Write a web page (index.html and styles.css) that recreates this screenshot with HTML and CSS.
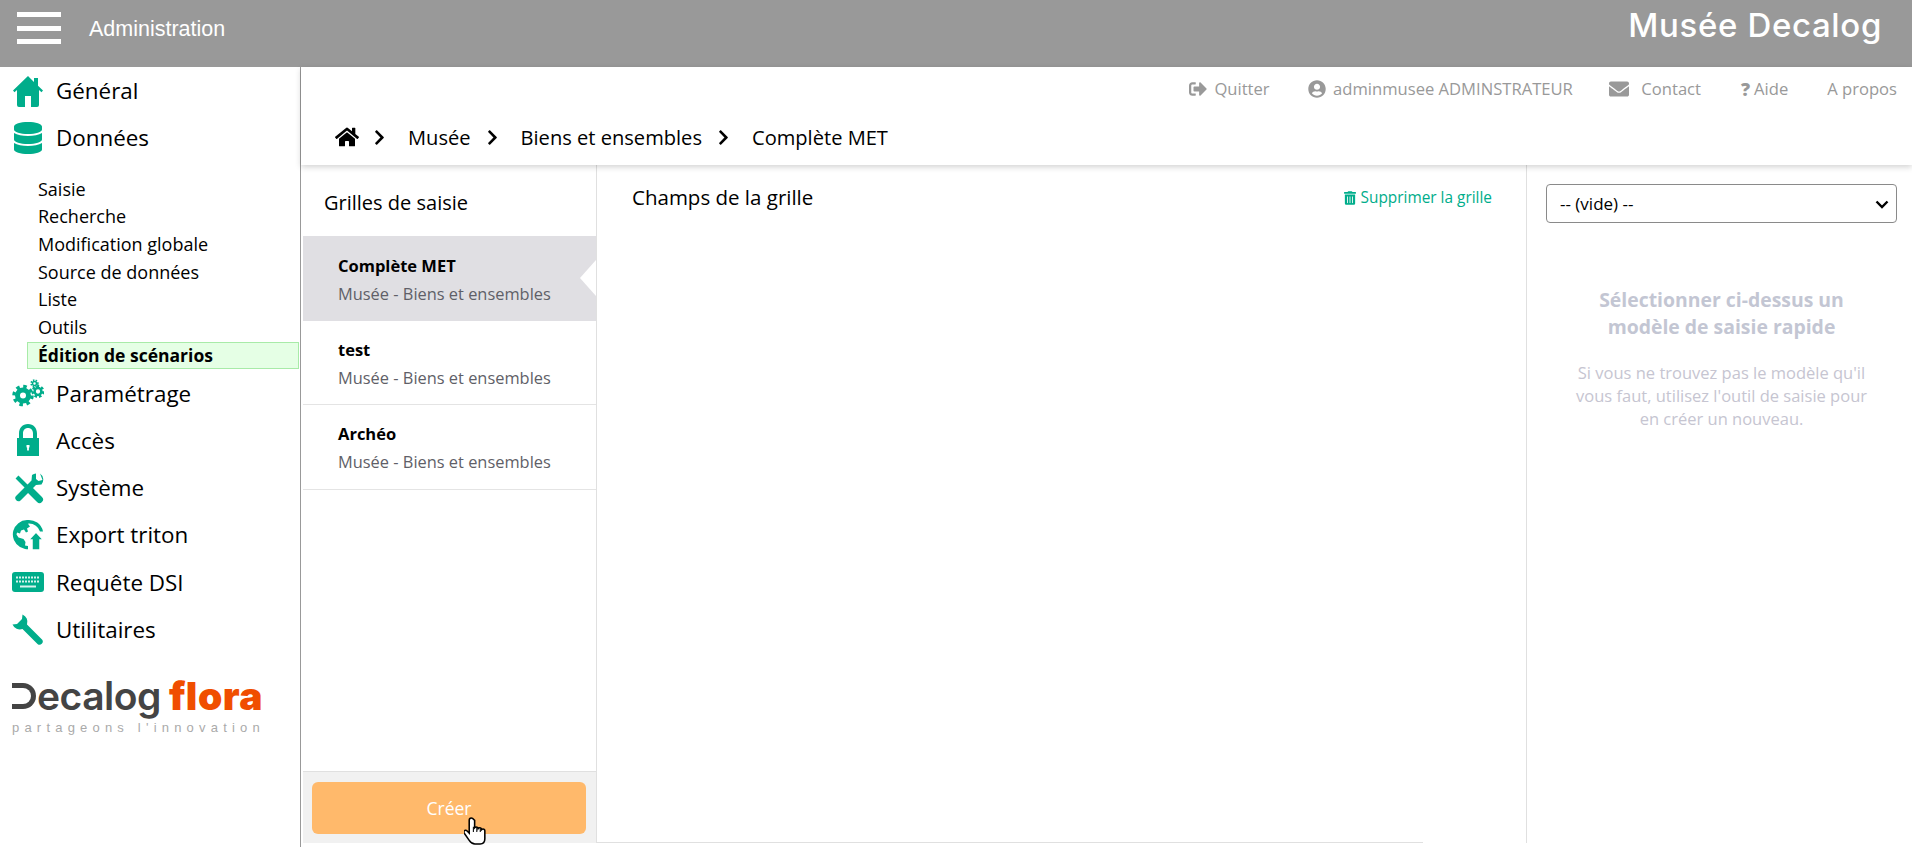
FILE: index.html
```html
<!DOCTYPE html>
<html lang="fr">
<head>
<meta charset="utf-8">
<title>Administration</title>
<link rel="stylesheet" href="styles.css">
</head>
<body>
<svg class="defs" width="0" height="0" aria-hidden="true">
  <symbol id="i-chev" viewBox="0 0 320 512"><path d="M285.476 272.971L91.132 467.314c-9.373 9.373-24.569 9.373-33.941 0l-22.667-22.667c-9.357-9.357-9.375-24.522-.04-33.901L188.505 256 34.484 101.255c-9.335-9.379-9.317-24.544.04-33.901l22.667-22.667c9.373-9.373 24.569-9.373 33.941 0L285.475 239.03c9.373 9.372 9.373 24.568.001 33.941z"/></symbol>
</svg>
<header class="topbar">
  <button class="burger" aria-label="Menu"><span></span><span></span><span></span></button>
  <div class="app-name">Administration</div>
  <div class="brand">Musée Decalog</div>
</header>
<div class="shell">
  <aside class="sidebar">
    <nav class="nav">
      <a class="nav-item"><svg class="nav-icon" viewBox="0 0 32 32"><path d="M16 1L1 15.500l1.500 1.700L5 15v15a2 2 0 0 0 2 2h6V21h6v11h6a2 2 0 0 0 2-2V15l2.500 2.200L31 15.500 26 10.700V3h-4v4z"/></svg>Général</a>
      <a class="nav-item"><svg class="nav-icon" viewBox="0 0 448 512"><path d="M448 73.143v45.714C448 159.143 347.667 192 224 192S0 159.143 0 118.857V73.143C0 32.857 100.333 0 224 0s224 32.857 224 73.143zM448 176v102.857C448 319.143 347.667 352 224 352S0 319.143 0 278.857V176c48.125 33.143 136.208 48.572 224 48.572S399.874 209.143 448 176zm0 160v102.857C448 479.143 347.667 512 224 512S0 479.143 0 438.857V336c48.125 33.143 136.208 48.572 224 48.572S399.874 369.143 448 336z"/></svg>Données</a>
      <ul class="subnav">
        <li>Saisie</li>
        <li>Recherche</li>
        <li>Modification globale</li>
        <li>Source de données</li>
        <li>Liste</li>
        <li>Outils</li>
        <li class="current">Édition de scénarios</li>
      </ul>
      <a class="nav-item"><svg class="nav-icon" viewBox="0 0 32 28"><circle class="gear-teeth" cx="11" cy="16.500" r="9"/><circle class="gear-ring" cx="11" cy="16.500" r="5.500"/><circle class="gear-teeth-s" cx="26" cy="12.500" r="5.300"/><circle class="gear-ring-s" cx="26" cy="12.500" r="3.400"/><circle class="gear-teeth-t" cx="22.500" cy="4.500" r="3.400"/><circle class="gear-ring-t" cx="22.500" cy="4.500" r="2"/></svg>Paramétrage</a>
      <a class="nav-item"><svg class="nav-icon" viewBox="0 0 32 32"><path fill-rule="evenodd" d="M16 0c-5.500 0-9 4-9 9.500V14H5v18h22V14h-2V9.500C25 4 21.500 0 16 0zm0 4c3 0 5 2.200 5 5.500V14H11V9.500C11 6.200 13 4 16 4zm-1.500 17h3v2l-.6 1v2.500h-1.800V24l-.6-1z"/></svg>Accès</a>
      <a class="nav-item"><svg class="nav-icon" viewBox="0 0 32 32"><path class="tool-shaft" d="M5 5l21 21"/><path class="tool-grip" d="M19 19l8.500 8.500"/><path d="M28 1.500a7.500 7.500 0 0 1 1.500 11L24 13 8.500 28.500a3.200 3.200 0 0 1-4.500-4.500L19.500 8.500 20 3a7.500 7.500 0 0 1 4-1.600V7l2.500 2 4-1z"/></svg>Système</a>
      <a class="nav-item"><svg class="nav-icon" viewBox="0 0 32 32"><path fill-rule="evenodd" d="M15 1a14.500 14.500 0 0 0-7 27l5 2c1 .2 2 .2 3 .2V27a11.500 11.500 0 0 1-3-.5l.5-3.500-2-3-5-1.500-2-3 .5-2 3 1 1-3 3-1 2 3 2-1-1-3 3-2-2-2.800 1-.2a11.500 11.500 0 0 1 11 8h3A14.500 14.500 0 0 0 15 1z"/><path class="globe-arrow" d="M24 13l7.500 8H28v10h-8V21h-3.500z"/></svg>Export triton</a>
      <a class="nav-item"><svg class="nav-icon" viewBox="0 0 32 24"><rect class="kb" width="32" height="20" y="2" rx="3"/><path class="kb-keys" d="M4 7.500h24M4 11.500h24"/><path class="kb-bar" d="M8 16.500h16"/></svg>Requête DSI</a>
      <a class="nav-item"><svg class="nav-icon" viewBox="0 0 32 32"><path d="M10.500.5A8 8 0 0 1 15 10.500l15 15a3.200 3.200 0 0 1-4.500 4.500L10.500 15A8 8 0 0 1 .5 10.500L5 10l5-5z"/></svg>Utilitaires</a>
    </nav>
    <div class="logo">
      <div class="logo-word"><span class="logo-mark"></span><span class="logo-dark">ecalog</span><span class="logo-flora">flora</span></div>
      <div class="logo-tag">partageons l'innovation</div>
    </div>
  </aside>
  <main class="main">
    <div class="toolbar">
      <div class="userbar">
        <a class="ub-link ub-quit"><svg class="ub-icon" viewBox="0 0 512 512"><path d="M497 273L329 441c-15 15-41 4.500-41-17v-96H152c-13.300 0-24-10.700-24-24v-96c0-13.300 10.700-24 24-24h136V88c0-21.400 25.900-32 41-17l168 168c9.300 9.400 9.300 24.600 0 34zM192 436v-40c0-6.600-5.400-12-12-12H96c-17.700 0-32-14.300-32-32V160c0-17.700 14.300-32 32-32h84c6.600 0 12-5.400 12-12V76c0-6.600-5.400-12-12-12H96c-53 0-96 43-96 96v192c0 53 43 96 96 96h84c6.600 0 12-5.400 12-12z"/></svg>Quitter</a>
        <a class="ub-link"><svg class="ub-icon" viewBox="0 0 496 512"><path d="M248 8C111 8 0 119 0 256s111 248 248 248 248-111 248-248S385 8 248 8zm0 96c48.600 0 88 39.400 88 88s-39.400 88-88 88-88-39.400-88-88 39.400-88 88-88zm0 344c-58.700 0-111.300-26.600-146.500-68.200 18.800-35.400 55.600-59.800 98.500-59.800 2.400 0 4.800.4 7.100 1.100 13 4.200 26.600 6.900 40.900 6.900 14.300 0 28-2.700 40.900-6.900 2.300-.7 4.700-1.100 7.100-1.100 42.900 0 79.700 24.400 98.500 59.800C359.300 421.400 306.700 448 248 448z"/></svg>adminmusee ADMINSTRATEUR</a>
        <a class="ub-link"><svg class="ub-icon ub-mail" viewBox="0 0 512 512"><path d="M502.300 190.800c3.900-3.100 9.700-.2 9.700 4.700V400c0 26.500-21.500 48-48 48H48c-26.500 0-48-21.500-48-48V195.600c0-5 5.700-7.800 9.700-4.700 22.400 17.400 52.100 39.500 154.100 113.600 21.100 15.400 56.700 47.800 92.200 47.600 35.700.3 72-32.800 92.300-47.600 102-74.100 131.600-96.300 154-113.700zM256 320c23.200.4 56.600-29.200 73.400-41.400 132.700-96.300 142.800-104.700 173.400-128.700 5.800-4.500 9.200-11.500 9.200-18.900v-19c0-26.500-21.500-48-48-48H48C21.500 64 0 85.500 0 112v19c0 7.400 3.400 14.300 9.200 18.900 30.600 23.900 40.700 32.400 173.400 128.700 16.800 12.200 50.200 41.800 73.400 41.400z"/></svg>Contact</a>
        <a class="ub-link ub-help"><span class="qmark">?</span>Aide</a>
        <a class="ub-link ub-about">A propos</a>
      </div>
      <div class="crumbs">
        <svg class="crumb-home" viewBox="0 0 576 512"><path d="M280.370 148.260L96 300.110V464a16 16 0 0 0 16 16l112.060-.29a16 16 0 0 0 15.920-16V368a16 16 0 0 1 16-16h64a16 16 0 0 1 16 16v95.640a16 16 0 0 0 16 16.050L464 480a16 16 0 0 0 16-16V300L295.670 148.260a12.190 12.190 0 0 0-15.300 0zM571.600 251.470L488 182.560V44.050a12 12 0 0 0-12-12h-56a12 12 0 0 0-12 12v72.610L318.470 43a48 48 0 0 0-61 0L4.340 251.470a12 12 0 0 0-1.600 16.900l25.500 31A12 12 0 0 0 45.150 301l235.220-193.740a12.190 12.190 0 0 1 15.300 0L530.900 301a12 12 0 0 0 16.900-1.600l25.500-31a12 12 0 0 0-1.700-16.930z"/></svg>
        <svg class="crumb-sep"><use href="#i-chev"/></svg><span>Musée</span>
        <svg class="crumb-sep"><use href="#i-chev"/></svg><span>Biens et ensembles</span>
        <svg class="crumb-sep"><use href="#i-chev"/></svg><span>Complète MET</span>
      </div>
    </div>
    <div class="columns">
      <section class="col-list">
        <h2 class="list-title">Grilles de saisie</h2>
        <div class="list">
          <div class="grid-card active"><strong>Complète MET</strong><span>Musée - Biens et ensembles</span></div>
          <div class="grid-card"><strong>test</strong><span>Musée - Biens et ensembles</span></div>
          <div class="grid-card"><strong>Archéo</strong><span>Musée - Biens et ensembles</span></div>
        </div>
        <div class="list-foot">
          <button class="create">Créer</button>
          <svg class="hand" viewBox="0 0 24 28"><path d="M7 1.500c-1.200 0-2 .9-2 2.200V16l-2-2c-1-1-2.500-.8-3 .3-.3.700 0 1.400.4 2l4.600 6.700c1.200 1.800 2.500 3.500 5.500 3.500h5c2.800 0 4.500-2 4.500-5v-7.500c0-1.100-.8-1.900-1.800-1.900-.6 0-1 .2-1.400.6 0-1.100-.8-1.800-1.800-1.800-.7 0-1.200.3-1.500.8-.2-.9-.9-1.500-1.800-1.500-.6 0-1.100.3-1.500.7V3.700C9 2.400 8.200 1.500 7 1.500z"/><path class="hand-line" d="M9 10v5M12.300 10.500V15M15.600 11.500V15"/></svg>
        </div>
      </section>
      <section class="col-main">
        <div class="main-head">
          <h2 class="main-title">Champs de la grille</h2>
          <a class="delete"><svg class="trash" viewBox="0 0 448 512"><path d="M32 464a48 48 0 0 0 48 48h288a48 48 0 0 0 48-48V128H32zm272-256a16 16 0 0 1 32 0v224a16 16 0 0 1-32 0zm-96 0a16 16 0 0 1 32 0v224a16 16 0 0 1-32 0zm-96 0a16 16 0 0 1 32 0v224a16 16 0 0 1-32 0zM432 32H312l-9.400-18.700A24 24 0 0 0 281.100 0H166.800a23.700 23.700 0 0 0-21.400 13.300L136 32H16A16 16 0 0 0 0 48v32a16 16 0 0 0 16 16h416a16 16 0 0 0 16-16V48a16 16 0 0 0-16-16z"/></svg>Supprimer la grille</a>
        </div>
      </section>
      <section class="col-side">
        <div class="model-wrap">
          <select class="model"><option>-- (vide) --</option></select>
          <svg class="model-arrow" viewBox="0 0 16 16"><path d="M2.500 5.500L8 11l5.500-5.500"/></svg>
        </div>
        <h3 class="side-title">Sélectionner ci-dessus un modèle de saisie rapide</h3>
        <p class="side-text">Si vous ne trouvez pas le modèle qu'il vous faut, utilisez l'outil de saisie pour en créer un nouveau.</p>
      </section>
    </div>
  </main>
</div>
</body>
</html>
```
FILE: styles.css
```css
* { box-sizing: border-box; }
html, body { margin: 0; height: 847px; overflow: hidden; background: #fff; }
body { font-family: "Open Sans", "Noto Sans", sans-serif; color: #000; }
.defs { position: absolute; }
h2, h3, p, ul { margin: 0; padding: 0; }

.topbar { height: 67px; background: #999; color: #fff; display: flex; align-items: flex-start; }
.burger { width: 44px; height: 32px; margin: 12px 0 0 17px; padding: 0; border: 0; background: none; display: flex; flex-direction: column; justify-content: space-between; }
.burger span { display: block; height: 5px; background: #fff; }
.app-name { margin: 17px 0 0 28px; font: 21.500px/24px "Liberation Sans", sans-serif; }
.brand { margin: 5px 30px 0 auto; font: 500 33px/40px "Inter", sans-serif; letter-spacing: 0.650px; }

.shell { display: flex; height: 780px; }
.sidebar { width: 301px; border-right: 1px solid #999; flex: none; }
.nav { padding: 0 1px 0 12px; }
.nav-item { display: flex; align-items: center; height: 47.300px; font-size: 22.400px; color: #000; white-space: nowrap; }
.nav-icon { width: 32px; height: 32px; margin-right: 12px; fill: #00ad8b; flex: none; }
.gear-teeth { fill: none; stroke: #00ad8b; stroke-width: 3.500; stroke-dasharray: 3.500 3.560; }
.gear-ring { fill: #fff; stroke: #00ad8b; stroke-width: 5; }
.gear-teeth-s { fill: none; stroke: #00ad8b; stroke-width: 2.500; stroke-dasharray: 2.500 2.100; }
.gear-ring-s { fill: #fff; stroke: #00ad8b; stroke-width: 2.500; }
.gear-teeth-t { fill: none; stroke: #00ad8b; stroke-width: 1.500; stroke-dasharray: 1.500 1.300; }
.gear-ring-t { fill: #fff; stroke: #00ad8b; stroke-width: 1.500; }
.tool-shaft { fill: none; stroke: #00ad8b; stroke-width: 4; }
.tool-grip { fill: none; stroke: #00ad8b; stroke-width: 7; stroke-linecap: round; }
.globe-arrow { stroke: #fff; stroke-width: 1.500; }
.kb { fill: #00ad8b; }
.kb-keys { stroke: #d8f3ee; stroke-width: 2; stroke-dasharray: 2 1; fill: none; }
.kb-bar { stroke: #d8f3ee; stroke-width: 2; fill: none; }

.subnav { list-style: none; padding: 14px 0 0 15px; }
.subnav li { font-size: 18px; line-height: 27.700px; padding-left: 11px; height: 27.700px; white-space: nowrap; }
.subnav .current { background: #e5ffe5; border: 1px solid #a8eba8; font-weight: 700; font-size: 17.500px; padding-left: 10px; line-height: 25.700px; }

.logo { margin: 25px 0 0 12px; width: 262px; }
.logo-word { display: flex; align-items: flex-end; height: 36px; font-family: "Inter", sans-serif; font-size: 39px; line-height: 36px; }
.logo-mark { width: 24px; height: 26px; margin: 0 1px 5px 0; border: 5px solid #444; border-left: 0; border-radius: 0 13px 13px 0; box-shadow: inset 6px 0 0 -1px #fff; }
.logo-dark { color: #444; font-weight: 600; letter-spacing: -0.500px; }
.logo-flora { color: #f04e00; font-weight: 900; margin-left: 8px; letter-spacing: 0.500px; }
.logo-tag { font: 13px/16px "Liberation Sans", sans-serif; letter-spacing: 5.200px; color: #aaa; margin-top: 6px; white-space: nowrap; }

.main { flex: 1; min-width: 0; display: flex; flex-direction: column; }
.toolbar { height: 98px; flex: none; padding-left: 1px; box-shadow: 0 2px 6px rgba(0,0,0,.18); position: relative; z-index: 1; background: #fff; }
.userbar { display: flex; justify-content: flex-end; padding: 10px 15px 0 0; height: 48px; font-size: 16.600px; color: #999; line-height: 24px; }
.ub-link { display: flex; align-items: center; height: 24px; margin-left: 36.500px; white-space: nowrap; }
.ub-quit { margin-right: 2px; }
.ub-icon { width: 18px; height: 18px; fill: #999; margin-right: 7px; }
.ub-mail { margin-right: 12px; width: 20px; height: 20px; }
.ub-help { margin-left: 40px; }
.ub-about { margin-left: 39px; }
.qmark { font-weight: 800; font-size: 18px; margin-right: 4px; }
.crumbs { display: flex; align-items: center; height: 44px; padding-left: 33px; font-size: 20.100px; }
.crumb-home { width: 24px; height: 22px; margin-right: 15px; fill: #000; }
.crumb-sep { width: 11px; height: 17px; margin-right: 23px; fill: #000; }
.crumbs span + .crumb-sep { margin-left: 16px; }

.columns { flex: 1; display: flex; min-height: 0; }
.col-list { width: 294px; flex: none; margin-left: 2px; margin-bottom: 4px; border-right: 1px solid #e0e0e0; display: flex; flex-direction: column; }
.list-title { font-size: 20px; font-weight: 400; line-height: 28px; padding: 24px 0 0 21px; height: 72px; margin-bottom: -1px; }
.list { flex: 1; }
.grid-card { height: 84.500px; border-bottom: 1px solid #e4e4e4; padding: 17px 0 0 35px; display: flex; flex-direction: column; position: relative; }
.grid-card strong { font-size: 16.500px; line-height: 24px; }
.grid-card span { font-size: 16.400px; line-height: 31px; color: #5f5f68; white-space: nowrap; }
.grid-card.active { background: #e0dfe3; border-bottom: 0; padding-top: 18px; }
.grid-card.active::after { content: ""; position: absolute; right: 0; top: 24px; border: 18px solid transparent; border-right-color: #fff; border-left-width: 0; border-right-width: 16px; }
.list-foot { height: 72px; flex: none; background: #f1f1f1; border-top: 1px solid #e0e0e0; padding: 10px 0 0 9px; position: relative; }
.create { display: block; width: 274px; height: 52px; background: #ffb96b; border: 0; border-radius: 6px; color: #fff; font: 17.500px "Open Sans", sans-serif; padding: 0; }
.hand { position: absolute; left: 161px; top: 42px; width: 25px; height: 34px; fill: #fff; stroke: #000; stroke-width: 1.500; }
.hand-line { fill: none; stroke-width: 1; }

.col-main { width: 929px; flex: none; margin-bottom: 4px; position: relative; }
.col-main::after { content: ""; position: absolute; left: 0; bottom: 0; width: 826px; height: 1px; background: #e0e0e0; }
.main-head { display: flex; justify-content: space-between; padding: 18px 34px 0 35px; }
.main-title { font-size: 20.500px; font-weight: 400; line-height: 28px; }
.delete { display: flex; align-items: center; color: #00ad8b; font-size: 15.400px; line-height: 28px; padding-top: 1px; }
.trash { width: 12px; height: 14px; fill: #00ad8b; margin-right: 5px; }
.col-side { flex: 1; border-left: 1px solid #e0e0e0; padding: 19px 15px 0 19px; margin-bottom: 4px; display: flex; flex-direction: column; align-items: center; }
.model-wrap { width: 100%; position: relative; }
.model { display: block; appearance: none; width: 100%; height: 39px; border: 1px solid #8a8a8a; border-radius: 4px; background: #fff; font: 17px "Open Sans", sans-serif; padding-left: 13px; color: #000; }
.model-arrow { position: absolute; right: 7px; top: 12px; width: 16px; height: 16px; fill: none; stroke: #000; stroke-width: 2.400; pointer-events: none; }
.side-title { margin-top: 62.500px; width: 300px; text-align: center; font-size: 19.400px; line-height: 27px; font-weight: 700; color: #c3c6d3; }
.side-text { margin-top: 21px; width: 300px; text-align: center; font-size: 16.500px; line-height: 23.400px; color: #c6c5d1; }
```
